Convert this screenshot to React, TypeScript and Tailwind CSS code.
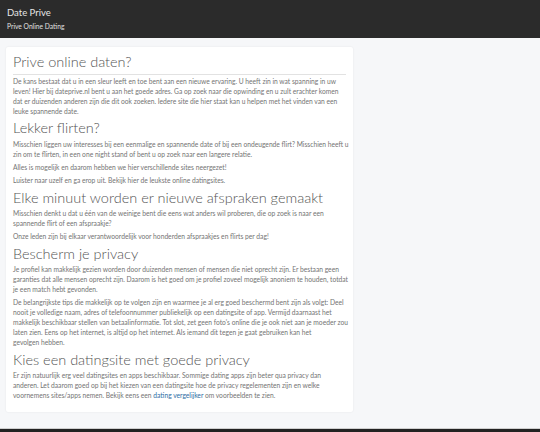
export default function App() {
  return (
    <div className="min-h-screen flex flex-col bg-[#f6f7f9] font-['Lato','Liberation_Sans',sans-serif] text-[#747474]">
      <header className="bg-[#2b2b2b] h-[38px] px-[7px] pt-[6px]">
        <div className="text-[9.5px] leading-[13px] text-[#e6e6e6]">Date Prive</div>
        <div className="text-[6.7px] leading-[12px] text-[#e0e0e0] mt-[1px]">Prive Online Dating</div>
      </header>

      <main className="flex-1 px-[6px] pt-[9px] pb-[16px]">
        <article className="w-[347px] bg-white rounded-[2px] shadow-[0_0_2px_rgba(0,0,0,0.08)] pl-[7px] pr-[2px] pt-[5px] pb-[12px] text-[6.7px] leading-[10px]">
          <h1 className="text-[14.5px] leading-[20px] font-light text-[#555] pb-[2px] mr-[5px] border-b border-[#e2e2e2]">Prive online daten?</h1>
          <p className="mt-[1px]">
            De kans bestaat dat u in een sleur leeft en toe bent aan een nieuwe ervaring. U heeft zin in wat spanning in uw
            leven! Hier bij dateprive.nl bent u aan het goede adres. Ga op zoek naar die opwinding en u zult erachter komen
            <br />
            dat er duizenden anderen zijn die dit ook zoeken. Iedere site die hier staat kan u helpen met het vinden van een
            leuke spannende date.
          </p>

          <h2 className="text-[14.5px] leading-[20px] font-light text-[#555] mt-[2px]">Lekker flirten?</h2>
          <p className="mt-[1px]">
            Misschien liggen uw interesses bij een eenmalige en spannende date of bij een ondeugende flirt? Misschien heeft u
            zin om te flirten, in een one night stand of bent u op zoek naar een langere relatie.
          </p>
          <p className="mt-[3px]">Alles is mogelijk en daarom hebben we hier verschillende sites neergezet!</p>
          <p className="mt-[3px]">Luister naar uzelf en ga erop uit. Bekijk hier de leukste online datingsites.</p>

          <h2 className="text-[14.5px] leading-[20px] font-light text-[#555] mt-[3px]">Elke minuut worden er nieuwe afspraken gemaakt</h2>
          <p>
            Misschien denkt u dat u één van de weinige bent die eens wat anders wil proberen, die op zoek is naar een
            spannende flirt of een afspraakje?
          </p>
          <p className="mt-[3px]">Onze leden zijn bij elkaar verantwoordelijk voor honderden afspraakjes en flirts per dag!</p>

          <h2 className="text-[14.5px] leading-[20px] font-light text-[#555] mt-[3px]">Bescherm je privacy</h2>
          <p>
            Je profiel kan makkelijk gezien worden door duizenden mensen of mensen die niet oprecht zijn. Er bestaan geen
            garanties dat alle mensen oprecht zijn. Daarom is het goed om je profiel zoveel mogelijk anoniem te houden, totdat
            je een match hebt gevonden.
          </p>
          <p className="mt-[3px]">
            De belangrijkste tips die makkelijk op te volgen zijn en waarmee je al erg goed beschermd bent zijn als volgt: Deel
            nooit je volledige naam, adres of telefoonnummer publiekelijk op een datingsite of app. Vermijd daarnaast het
            makkelijk beschikbaar stellen van betaalinformatie. Tot slot, zet geen foto's online die je ook niet aan je moeder
            zou laten zien. Eens op het internet, is altijd op het internet. Als iemand dit tegen je gaat gebruiken kan het
            <br />
            gevolgen hebben.
          </p>

          <h2 className="text-[14.5px] leading-[20px] font-light text-[#555] mt-[3px]">Kies een datingsite met goede privacy</h2>
          <p>
            Er zijn natuurlijk erg veel datingsites en apps beschikbaar. Sommige dating apps zijn beter qua privacy dan
            <br />
            anderen. Let daarom goed op bij het kiezen van een datingsite hoe de privacy regelementen zijn en welke
            <br />
            voornemens sites/apps nemen. Bekijk eens een{' '}
            <a href="#" className="text-[#2e6da4]">dating vergelijker</a> om voorbeelden te zien.
          </p>
        </article>
      </main>

      <footer className="h-[4px] bg-[#222] border-t border-[#cfcfcf]" />
    </div>
  );
}
